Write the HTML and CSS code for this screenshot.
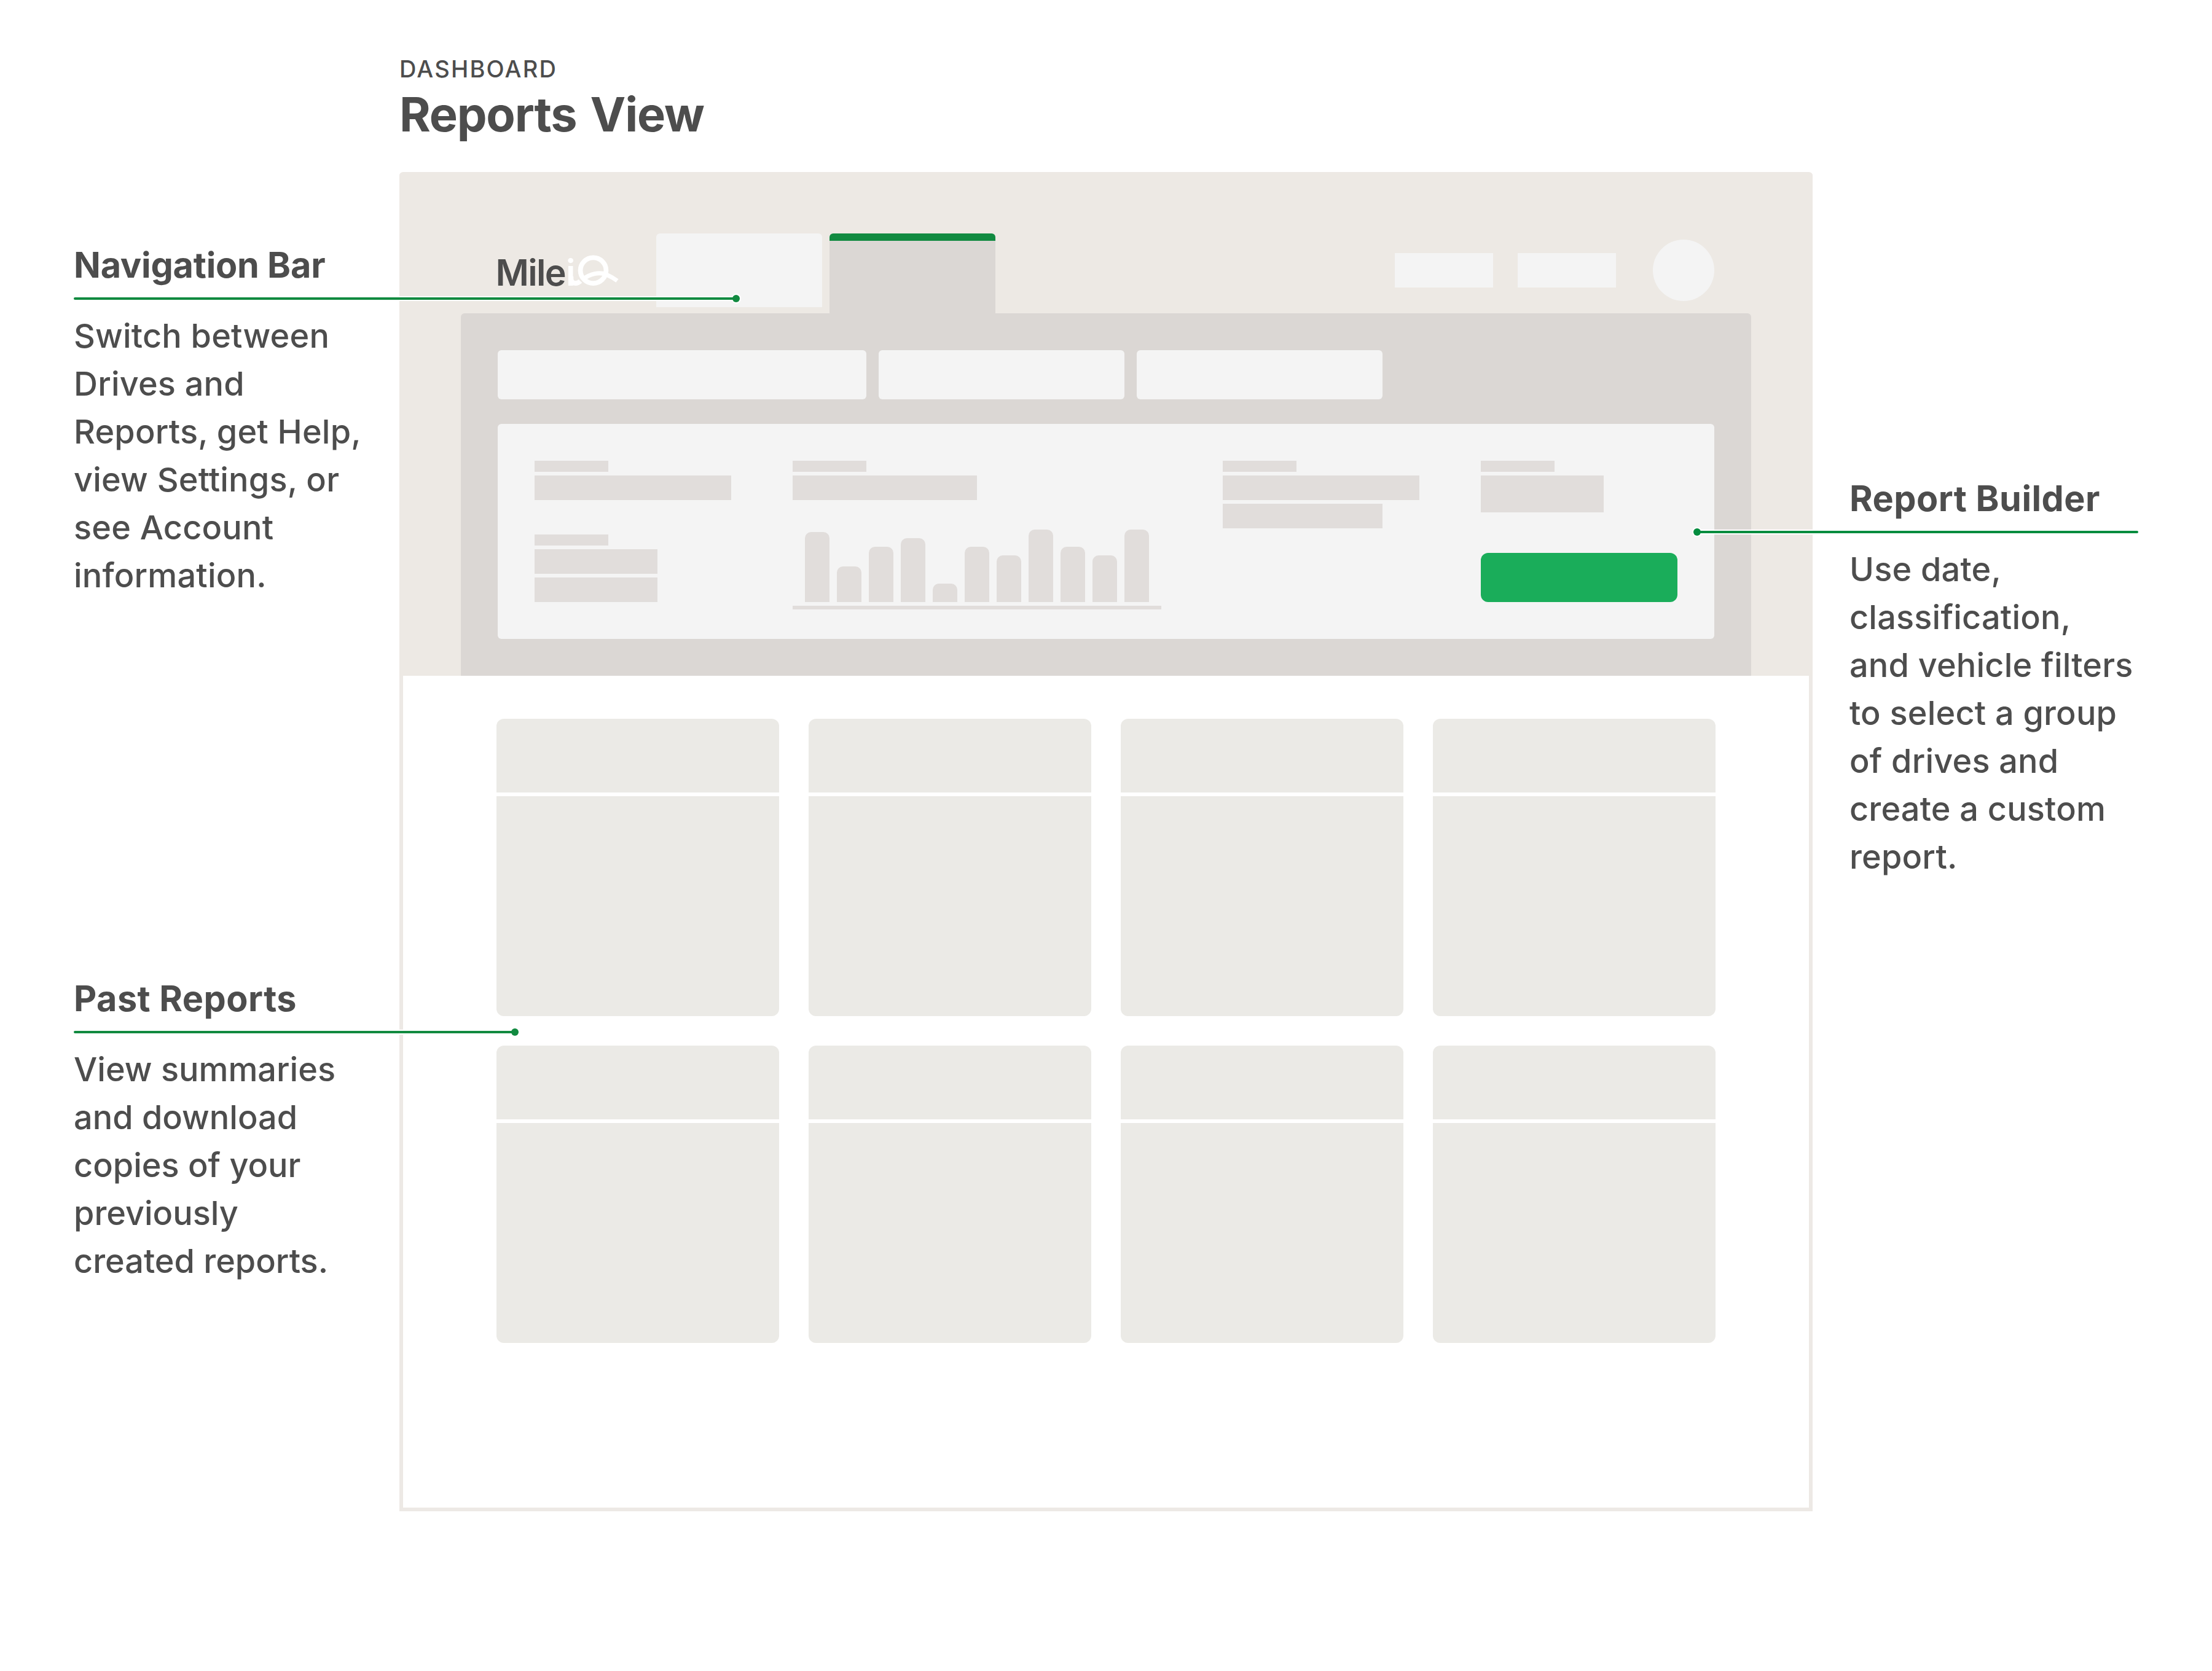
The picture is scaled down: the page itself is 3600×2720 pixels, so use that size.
FILE: index.html
```html
<!DOCTYPE html>
<html lang="en">
<head>
    <meta charset="UTF-8">
    <meta name="viewport" content="width=device-width, initial-scale=1.0">
    <title>Reports View</title>
    <link rel="stylesheet" href="styles.css">
</head>
<body>
    <div class="page">

        <!-- Left callouts -->
        <aside class="side side-left">
            <section class="callout callout-nav">
                <h2>Navigation Bar</h2>
                <svg class="leader" width="1090" height="16" viewBox="0 0 1090 16">
                    <circle cx="1078" cy="8" r="8" fill="#fff"/>
                    <rect x="0" y="4" width="1078" height="8" fill="#fff"/>
                    <rect x="0" y="6" width="1078" height="4" rx="2"/>
                    <circle cx="1078" cy="8" r="6"/>
                </svg>
                <p>Switch between<br>Drives and<br>Reports, get Help,<br>view Settings, or<br>see Account<br>information.</p>
            </section>
            <section class="callout callout-past">
                <h2>Past Reports</h2>
                <svg class="leader" width="730" height="16" viewBox="0 0 730 16">
                    <circle cx="718" cy="8" r="8" fill="#fff"/>
                    <rect x="0" y="4" width="718" height="8" fill="#fff"/>
                    <rect x="0" y="6" width="718" height="4" rx="2"/>
                    <circle cx="718" cy="8" r="6"/>
                </svg>
                <p>View summaries<br>and download<br>copies of your<br>previously<br>created reports.</p>
            </section>
        </aside>

        <main class="main">
            <header class="title">
                <div class="eyebrow">DASHBOARD</div>
                <h1>Reports View</h1>
            </header>

            <div class="frame">
                <div class="top">
                    <!-- Navigation Bar -->
                    <nav class="navbar">
                        <svg class="logo" width="230" height="80" viewBox="0 0 230 80">
                            <text class="logo-mile" x="6.5" y="64.5">Mile</text>
                            <text class="logo-i" x="121" y="64.5">i</text>
                            <g fill="none" stroke="#fff">
                                <path d="M129.3 50V54Q129.5 61 137 61Q141 61 144.500 57.500" stroke-width="8"/>
                                <circle cx="165.500" cy="40.200" r="20.900" stroke-width="7.800"/>
                                <path d="M149 54.500C160 46 175 42 187 47C194 50 199 53 204.500 57" stroke-width="7"/>
                            </g>
                        </svg>
                        <div class="tab"></div>
                        <div class="tab active"></div>
                        <div class="nav-right">
                            <div class="nav-link"></div>
                            <div class="nav-link"></div>
                            <div class="avatar"></div>
                        </div>
                    </nav>

                    <!-- Report Builder -->
                    <div class="panel">
                        <div class="filters">
                            <div class="filter wide"></div>
                            <div class="filter"></div>
                            <div class="filter"></div>
                        </div>
                        <div class="builder">
                            <div class="col">
                                <div class="label"></div>
                                <div class="line w320"></div>
                                <div class="label second"></div>
                                <div class="line w200"></div>
                                <div class="line w200"></div>
                            </div>
                            <div class="col">
                                <div class="label"></div>
                                <div class="line w300"></div>
                                <div class="chart">
                                    <div class="bar" style="height: 114px"></div>
                                    <div class="bar" style="height: 58px"></div>
                                    <div class="bar" style="height: 90px"></div>
                                    <div class="bar" style="height: 104px"></div>
                                    <div class="bar" style="height: 30px"></div>
                                    <div class="bar" style="height: 90px"></div>
                                    <div class="bar" style="height: 76px"></div>
                                    <div class="bar" style="height: 118px"></div>
                                    <div class="bar" style="height: 90px"></div>
                                    <div class="bar" style="height: 76px"></div>
                                    <div class="bar" style="height: 118px"></div>
                                </div>
                                <div class="axis"></div>
                            </div>
                            <div class="col">
                                <div class="label"></div>
                                <div class="line w320"></div>
                                <div class="line w260"></div>
                            </div>
                            <div class="col">
                                <div class="label"></div>
                                <div class="line w200 tall"></div>
                                <div class="create-btn"></div>
                            </div>
                        </div>
                    </div>
                </div>

                <!-- Past Reports -->
                <div class="reports">
                    <div class="report"><div class="report-head"></div><div class="report-body"></div></div>
                    <div class="report"><div class="report-head"></div><div class="report-body"></div></div>
                    <div class="report"><div class="report-head"></div><div class="report-body"></div></div>
                    <div class="report"><div class="report-head"></div><div class="report-body"></div></div>
                    <div class="report"><div class="report-head"></div><div class="report-body"></div></div>
                    <div class="report"><div class="report-head"></div><div class="report-body"></div></div>
                    <div class="report"><div class="report-head"></div><div class="report-body"></div></div>
                    <div class="report"><div class="report-head"></div><div class="report-body"></div></div>
                </div>
            </div>
        </main>

        <!-- Right callout -->
        <aside class="side side-right">
            <section class="callout callout-builder">
                <h2>Report Builder</h2>
                <svg class="leader leader-right" width="726" height="16" viewBox="0 0 726 16">
                    <circle cx="8" cy="8" r="8" fill="#fff"/>
                    <rect x="8" y="4" width="718" height="8" fill="#fff"/>
                    <rect x="8" y="6" width="718" height="4" rx="2"/>
                    <circle cx="8" cy="8" r="6"/>
                </svg>
                <p>Use date,<br>classification,<br>and vehicle filters<br>to select a group<br>of drives and<br>create a custom<br>report.</p>
            </section>
        </aside>

    </div>
</body>
</html>
```
FILE: styles.css
```css
* {
    box-sizing: border-box;
}

body {
    margin: 0;
    background-color: #fff;
    color: #4d4d4d;
    font-family: Inter, "Liberation Sans", sans-serif;
}

.page {
    display: grid;
    grid-template-columns: 530px 2300px 470px;
    height: 2720px;
    padding-left: 120px;
}

/* Callouts */
.side {
    display: flex;
    flex-direction: column;
    gap: 614.5px;
}

.side-left {
    padding-top: 396px;
}

.side-right {
    padding: 776px 0 0 60px;
}

.callout {
    position: relative;
    white-space: nowrap;
}

.callout h2 {
    margin: 0 0 41.5px;
    font-size: 57.5px;
    font-weight: 650;
    line-height: 70px;
    letter-spacing: 0.5px;
}

.callout-nav h2 {
    letter-spacing: -0.2px;
}

.callout p {
    margin: 0;
    font-size: 54px;
    font-weight: 450;
    line-height: 78px;
    letter-spacing: 0.2px;
}

.callout-past p {
    letter-spacing: 0;
}

/* Leader lines run over the frame */
.leader {
    position: absolute;
    top: 82px;
    left: 0;
    z-index: 1;
    fill: #118a40;
}

.leader-right {
    left: -256px;
    fill: #038c3e;
}

/* Title */
.title {
    height: 280px;
    padding-top: 89px;
}

.eyebrow {
    margin-bottom: 6px;
    font-size: 38px;
    font-weight: 500;
    line-height: 46px;
    letter-spacing: 2.2px;
}

.title h1 {
    margin: 0;
    font-size: 77.5px;
    font-weight: 650;
    line-height: 90px;
    letter-spacing: -1.2px;
    word-spacing: 5px;
}

/* Frame */
.frame {
    height: 2180px;
    border: 6px solid #ede9e5;
    border-top-color: #ede9e4;
    border-radius: 6px 6px 0 0;
}

.top {
    height: 814px;
    margin: 0 -6px;
    padding: 94px 100px 0;
    background-color: #ede9e4;
}

/* Navigation Bar */
.navbar {
    display: flex;
    align-items: flex-start;
    height: 130px;
    padding: 0 60px 0 50px;
}

.logo {
    margin: 20px 38px 0 0;
}

.logo text {
    font-size: 59px;
    font-weight: 600;
}

.logo-mile {
    fill: #4d4d4d;
    letter-spacing: -1.7px;
}

.logo-i {
    fill: #fff;
}

.tab {
    width: 270px;
    height: 120px;
    margin-right: 12px;
    border-radius: 6px 6px 0 0;
    background-color: #f4f4f4;
}

.tab.active {
    height: 130px;
    background: linear-gradient(#118a40 12px, #dbd7d4 12px);
}

.nav-right {
    display: flex;
    align-items: center;
    margin: 10px 0 0 auto;
}

.nav-link {
    width: 160px;
    height: 56px;
    margin-right: 40px;
    background-color: #f4f4f4;
}

.avatar {
    width: 100px;
    height: 100px;
    margin-left: 20px;
    border-radius: 50%;
    background-color: #f4f4f4;
}

/* Report Builder */
.panel {
    height: 590px;
    padding: 60px;
    border-radius: 6px 6px 0 0;
    background-color: #dbd7d4;
}

.filters {
    display: flex;
    gap: 20px;
    margin-bottom: 40px;
}

.filter {
    width: 400px;
    height: 80px;
    border-radius: 6px;
    background-color: #f4f4f4;
}

.filter.wide {
    width: 600px;
}

.builder {
    display: grid;
    grid-template-columns: 420px 700px 420px 320px;
    height: 350px;
    padding: 60px;
    border-radius: 6px;
    background-color: #f4f4f4;
}

.label,
.line,
.bar,
.axis {
    background-color: #e1dddb;
}

.label {
    width: 120px;
    height: 18px;
}

.label.second {
    margin-top: 56px;
}

.line {
    height: 40px;
    margin-top: 6px;
}

.line.tall {
    height: 60px;
}

.w200 { width: 200px; }
.w260 { width: 260px; }
.w300 { width: 300px; }
.w320 { width: 320px; }

.chart {
    display: flex;
    align-items: flex-end;
    gap: 12px;
    height: 166px;
    padding-left: 20px;
}

.bar {
    width: 40px;
    border-radius: 10px 10px 0 0;
}

.axis {
    width: 600px;
    height: 6px;
    margin-top: 6px;
}

.create-btn {
    width: 320px;
    height: 80px;
    margin-top: 66px;
    border-radius: 12px;
    background-color: #1aad5a;
}

/* Past Reports */
.reports {
    display: grid;
    grid-template-columns: repeat(4, 460px);
    gap: 48px;
    padding: 70px 152px 0;
}

.report-head,
.report-body {
    background-color: #ebeae6;
}

.report-head {
    height: 120px;
    margin-bottom: 6px;
    border-radius: 12px 12px 0 0;
}

.report-body {
    height: 358px;
    border-radius: 0 0 12px 12px;
}
```
